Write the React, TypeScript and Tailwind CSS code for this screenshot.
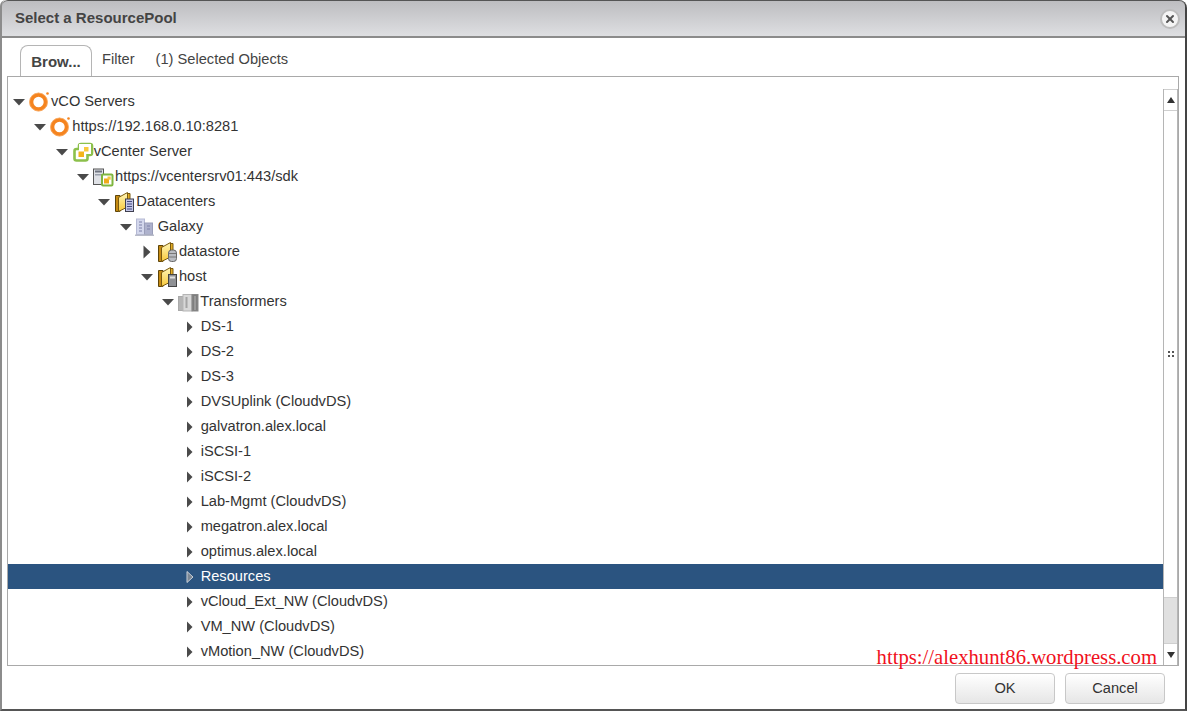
import React from "react";
import { X } from "lucide-react";

type IconName = "vco" | "vcenter" | "sdk" | "folderDc" | "dc" | "folderDs" | "folderHost" | "cluster";

type Node = {
    label: string;
    level: number;
    icon?: IconName;
    open?: boolean;
    selected?: boolean;
};

const nodes: Node[] = [
    { label: "vCO Servers", level: 0, icon: "vco", open: true },
    { label: "https://192.168.0.10:8281", level: 1, icon: "vco", open: true },
    { label: "vCenter Server", level: 2, icon: "vcenter", open: true },
    { label: "https://vcentersrv01:443/sdk", level: 3, icon: "sdk", open: true },
    { label: "Datacenters", level: 4, icon: "folderDc", open: true },
    { label: "Galaxy", level: 5, icon: "dc", open: true },
    { label: "datastore", level: 6, icon: "folderDs" },
    { label: "host", level: 6, icon: "folderHost", open: true },
    { label: "Transformers", level: 7, icon: "cluster", open: true },
    { label: "DS-1", level: 8 },
    { label: "DS-2", level: 8 },
    { label: "DS-3", level: 8 },
    { label: "DVSUplink (CloudvDS)", level: 8 },
    { label: "galvatron.alex.local", level: 8 },
    { label: "iSCSI-1", level: 8 },
    { label: "iSCSI-2", level: 8 },
    { label: "Lab-Mgmt (CloudvDS)", level: 8 },
    { label: "megatron.alex.local", level: 8 },
    { label: "optimus.alex.local", level: 8 },
    { label: "Resources", level: 8, selected: true },
    { label: "vCloud_Ext_NW (CloudvDS)", level: 8 },
    { label: "VM_NW (CloudvDS)", level: 8 },
    { label: "vMotion_NW (CloudvDS)", level: 8 },
];

function Folder({ children }: { children: React.ReactNode }) {
    return (
        <svg width="21" height="21" viewBox="0 0 21 21" className="overflow-visible">
            <defs>
                <linearGradient id="leaf" x1="0" y1="0" x2="0" y2="1">
                    <stop offset="0" stopColor="#fff6b8" />
                    <stop offset="1" stopColor="#f8c93a" />
                </linearGradient>
            </defs>
            <path d="M0.5 4.5h4.5v16H0.5z" fill="#c58a12" stroke="#5e4509" />
            <path d="M11 2.5h4v14H11z" fill="#e3ad25" stroke="#7a5a10" />
            <path d="M3.5 6.5L12.5 1.5V16L3.5 20.5z" fill="url(#leaf)" stroke="#7a5a10" />
            {children}
        </svg>
    );
}

function TreeIcon({ name }: { name: IconName }) {
    if (name === "vco") {
        return (
            <svg width="21" height="21" viewBox="0 0 21 21" className="-ml-px overflow-visible">
                <circle cx="9.5" cy="11" r="7.2" fill="none" stroke="#f5841f" strokeWidth="4" />
                <circle cx="9.5" cy="11" r="9" fill="none" stroke="#f9b16e" strokeWidth="0.8" />
                <circle cx="18.5" cy="2.5" r="1.3" fill="#f5841f" />
            </svg>
        );
    }
    if (name === "vcenter") {
        return (
            <svg width="21" height="21" viewBox="0 0 21 21" className="overflow-visible">
                <rect x="6" y="3" width="13" height="11" rx="2" fill="#fff" stroke="#8cc04b" strokeWidth="2.6" />
                <rect x="1.5" y="8" width="13" height="11.5" rx="2" fill="#fff" stroke="#8cc04b" strokeWidth="2.6" />
                <rect x="6" y="3" width="12" height="10" fill="#fff" />
                <rect x="5.5" y="10.5" width="5.5" height="5.5" fill="#f3b41b" />
                <rect x="11" y="6" width="4.5" height="4.5" fill="#f8c93c" />
            </svg>
        );
    }
    if (name === "sdk") {
        return (
            <svg width="21" height="21" viewBox="0 0 21 21" className="overflow-visible">
                <rect x="-0.5" y="3" width="10" height="15.5" fill="#dfe1e6" stroke="#555" />
                <rect x="1" y="4.5" width="7" height="2" fill="#6f7480" />
                <rect x="1" y="8" width="7" height="1.5" fill="#9aa0ac" />
                <rect x="8" y="8.5" width="10.5" height="11" rx="1" fill="#fff" stroke="#7fb63f" strokeWidth="2" />
                <rect x="10" y="12.5" width="5" height="5" fill="#eea91a" />
                <rect x="13.5" y="10.5" width="3.2" height="3.2" fill="#f6c640" />
            </svg>
        );
    }
    if (name === "folderDc") {
        return (
            <Folder>
                <rect x="10.5" y="8" width="8" height="12.5" fill="#c3c6e6" stroke="#3f4050" />
                <path d="M12 10.5h5M12 13h5M12 15.5h5M12 18h5" stroke="#444a80" />
            </Folder>
        );
    }
    if (name === "folderDs") {
        return (
            <Folder>
                <rect x="10.5" y="9" width="8" height="11.5" rx="3" fill="#b9bcc2" stroke="#666" />
                <path d="M10.5 12.5h8M10.5 16h8" stroke="#777" />
            </Folder>
        );
    }
    if (name === "folderHost") {
        return (
            <Folder>
                <rect x="10.5" y="8.5" width="8" height="12" fill="#8f9195" stroke="#444" />
                <rect x="12" y="10.5" width="5" height="2" fill="#e0e0e0" />
            </Folder>
        );
    }
    if (name === "dc") {
        return (
            <svg width="21" height="21" viewBox="0 0 21 21" className="-ml-[2px] overflow-visible">
                <rect x="1.5" y="3" width="8" height="15.5" fill="#d3d7ec" stroke="#b5b9d4" />
                <rect x="9.5" y="7" width="8" height="11.5" fill="#aeb2cd" stroke="#9a9eb9" />
                <path d="M4 6h3M4 9h3M4 12h3M4 15h3M12 10h3M12 13h3" stroke="#7c80a8" />
                <rect x="0" y="18.5" width="19" height="1.5" fill="#b8bbc9" />
            </svg>
        );
    }
    return (
        <svg width="21" height="21" viewBox="0 0 21 21" className="-ml-px overflow-visible">
            <rect x="0.5" y="5.5" width="5" height="14" fill="#b5b5b5" stroke="#aaa" />
            <rect x="5" y="3.5" width="9" height="16.5" fill="#d8d8d8" stroke="#b5b5b5" />
            <rect x="14" y="3.5" width="6" height="16.5" fill="#7e7e7e" stroke="#8a8a8a" />
            <path d="M8.5 6v11" stroke="#a5a5a5" strokeWidth="2" />
            <path d="M17 5v14" stroke="#b5b5b5" />
        </svg>
    );
}

function Arrow({ node }: { node: Node }) {
    if (node.selected) {
        return (
            <svg width="10" height="14" viewBox="0 0 10 14">
                <path d="M2 1.5l6 5.5-6 5.5z" fill="#7b8794" stroke="#c9d0d8" />
            </svg>
        );
    }
    if (node.open) {
        return (
            <svg width="12" height="8" viewBox="0 0 12 8">
                <path d="M0 1h12L6 7.5z" fill="#4a4a4a" />
            </svg>
        );
    }
    if (node.icon) {
        return (
            <svg width="8" height="14" viewBox="0 0 8 14">
                <path d="M0.5 0.5L7.5 7 0.5 13.5z" fill="#4a4a4a" />
            </svg>
        );
    }
    return (
        <svg width="7" height="12" viewBox="0 0 7 12">
            <path d="M1 0.5v11L6.5 6z" fill="#4a4a4a" />
        </svg>
    );
}

function TreeRow({ node }: { node: Node }) {
    const indent = node.level * 21.33;
    return (
        <div
            className={`flex h-[25px] items-center ${node.selected ? "bg-[#2b5480] text-white" : "text-[#333]"}`}
            style={{ paddingLeft: indent }}
        >
            <span className="flex w-[22px] shrink-0 items-center justify-center">
                <Arrow node={node} />
            </span>
            {node.icon && (
                <span className="flex w-[21px] shrink-0 items-center">
                    <TreeIcon name={node.icon} />
                </span>
            )}
            <span className="whitespace-nowrap">{node.label}</span>
        </div>
    );
}

function Scrollbar() {
    return (
        <div className="flex w-[15px] shrink-0 flex-col border-x border-[#b5b5b5] bg-[#e0e0e0]">
            <div className="flex h-[22px] shrink-0 items-center justify-center border-b border-t border-[#cfcfcf] bg-white">
                <svg width="8" height="6" viewBox="0 0 8 6">
                    <path d="M4 0l4 6H0z" fill="#333" />
                </svg>
            </div>
            <div className="flex h-[487px] shrink-0 items-center justify-center border-b border-[#cfcfcf] bg-white">
                <div className="grid grid-cols-2 gap-x-[2px] gap-y-[2px]">
                    <span className="h-[2px] w-[2px] bg-[#555]" />
                    <span className="h-[2px] w-[2px] bg-[#555]" />
                    <span className="h-[2px] w-[2px] bg-[#555]" />
                    <span className="h-[2px] w-[2px] bg-[#555]" />
                </div>
            </div>
            <div className="flex-1" />
            <div className="flex h-[22px] shrink-0 items-center justify-center border-t border-[#cfcfcf] bg-white">
                <svg width="8" height="6" viewBox="0 0 8 6">
                    <path d="M4 6l4-6H0z" fill="#333" />
                </svg>
            </div>
        </div>
    );
}

export default function App() {
    return (
        <div className="h-[711px] w-[1187px] overflow-hidden bg-white font-['Liberation_Sans',Arial,sans-serif] text-[14.65px]">
            <div className="flex h-full flex-col rounded-tr-[8px] rounded-tl-[6px] border border-b-2 border-l-2 border-r-2 border-t-0 border-b-[#555] border-l-[#8c8c8c] border-r-[#444]">
                <div className="flex h-[38px] shrink-0 items-center justify-between rounded-t-[6px] border-b-2 border-t border-b-[#8b8b8b] border-t-[#555] bg-gradient-to-b from-[#bdbdc0] to-[#dedfe2] pl-[13px] pr-[5px]">
                    <span className="text-[15px] font-bold text-[#444]">Select a ResourcePool</span>
                    <span className="flex h-[20px] w-[20px] items-center justify-center rounded-full border-2 border-[#bcbcbc] bg-[#f4f4f4]">
                        <X size={12} strokeWidth={4} className="text-[#555]" />
                    </span>
                </div>
                <div className="flex h-[38px] shrink-0 items-end pl-[18px]">
                    <div className="relative top-[1px] flex h-[32px] w-[72px] items-center justify-center rounded-t-[8px] border border-b-0 border-[#b5b5b5] bg-white pt-[2px] text-[15px] font-bold text-[#444]">
                        Brow...
                    </div>
                    <span className="ml-[10px] pb-[5px] text-[#444]">Filter</span>
                    <span className="ml-[21px] pb-[5px] text-[#444]">(1) Selected Objects</span>
                </div>
                <div className="relative ml-[5px] mr-[6px] flex h-[590px] shrink-0 border border-[#a9a9a9]">
                    <div className="min-w-0 flex-1 overflow-hidden pt-[12px]">
                        {nodes.map((node) => (
                            <TreeRow key={node.label} node={node} />
                        ))}
                    </div>
                    <div className="flex pt-[12px]">
                        <Scrollbar />
                    </div>
                    <span className="absolute bottom-[-8px] right-[21px] font-['Liberation_Serif',serif] text-[20.7px] text-[#f01020]">
                        https://alexhunt86.wordpress.com
                    </span>
                </div>
                <div className="flex flex-1 items-start justify-end gap-[10px] pr-[20px] pt-[7px]">
                    <button className="h-[31px] w-[100px] rounded-[4px] border border-[#c8c8c8] bg-gradient-to-b from-white to-[#e6e6e6] text-[#333]">
                        OK
                    </button>
                    <button className="h-[31px] w-[100px] rounded-[4px] border border-[#c8c8c8] bg-gradient-to-b from-white to-[#e6e6e6] text-[#333]">
                        Cancel
                    </button>
                </div>
            </div>
        </div>
    );
}
